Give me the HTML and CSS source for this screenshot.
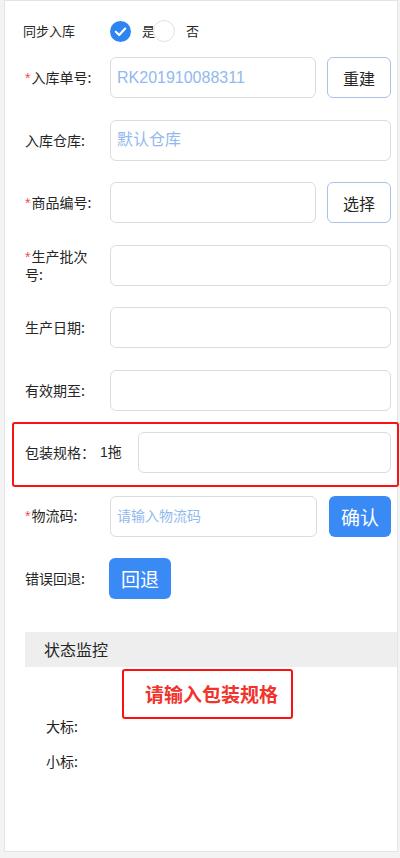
FILE: index.html
```html
<!DOCTYPE html>
<html lang="zh-CN">
<head>
<meta charset="utf-8">
<title>同步入库</title>
<link rel="stylesheet" href="styles.css">
</head>
<body>
<div class="card">
  <div class="sync-row">
    <span class="sync-label">同步入库</span>
    <span class="radio radio-on">
      <svg width="21" height="21" viewBox="0 0 21 21"><circle cx="10.5" cy="10.5" r="10.5" fill="#2f84f3"/><polyline points="5.8,10.8 9.2,14 15.2,7.6" fill="none" stroke="#fff" stroke-width="2.2" stroke-linecap="round" stroke-linejoin="round"/></svg>
    </span>
    <span class="radio-text">是</span>
    <span class="radio radio-off"></span>
    <span class="radio-text radio-text-last">否</span>
  </div>

  <div class="form">
    <div class="row">
      <label class="label"><span class="req">*</span>入库单号:</label>
      <input class="field field-value" value="RK201910088311" readonly>
      <button class="btn btn-plain">重建</button>
    </div>
    <div class="row">
      <label class="label">入库仓库:</label>
      <input class="field" placeholder="默认仓库">
    </div>
    <div class="row">
      <label class="label"><span class="req">*</span>商品编号:</label>
      <input class="field">
      <button class="btn btn-plain">选择</button>
    </div>
    <div class="row">
      <label class="label label-wrap"><span class="req">*</span>生产批次号:</label>
      <input class="field">
    </div>
    <div class="row">
      <label class="label">生产日期:</label>
      <input class="field">
    </div>
    <div class="row">
      <label class="label">有效期至:</label>
      <input class="field">
    </div>
    <div class="row row-marked">
      <label class="label label-auto">包装规格：</label>
      <span class="unit">1拖</span>
      <input class="field field-pack">
    </div>
    <div class="row">
      <label class="label"><span class="req">*</span>物流码:</label>
      <input class="field field-small" placeholder="请输入物流码">
      <button class="btn btn-primary btn-confirm">确认</button>
    </div>
    <div class="row row-last">
      <label class="label">错误回退:</label>
      <button class="btn btn-primary btn-back">回退</button>
    </div>
  </div>

  <div class="status">
    <div class="status-head">状态监控</div>
    <div class="status-line status-first">大标:</div>
    <div class="status-line">小标:</div>
    <div class="toast">请输入包装规格</div>
  </div>
</div>
</body>
</html>
```

FILE: styles.css
```css
html, body {
  margin: 0;
  padding: 0;
}
body {
  background: #f3f3f3;
  padding: 0 2px 0 4px;
  font-family: "Noto Sans CJK SC", "Liberation Sans", sans-serif;
  color: #262626;
}
.card {
  box-sizing: border-box;
  width: 394px;
  height: 852px;
  background: #fff;
  border: 1px solid #e4e4e4;
  padding: 19px 6px 0 20px;
}

/* sync row */
.sync-row {
  display: flex;
  align-items: center;
  height: 22px;
  margin-bottom: 15px;
  font-size: 13px;
  line-height: 16px;
}
.sync-label {
  width: 87px;
  margin-left: -2px;
}
.radio {
  display: block;
  box-sizing: border-box;
  flex: none;
}
.radio svg { display: block; }
.radio-on {
  width: 21px;
  height: 21px;
  margin-right: 11px;
}
.radio-off {
  width: 22px;
  height: 22px;
  border: 1px solid #e2e2e2;
  border-radius: 50%;
  background: #fff;
  margin-left: -2px;
  margin-right: 11px;
}

/* form */
.form {
  display: flex;
  flex-direction: column;
}
.row {
  display: flex;
  align-items: center;
  height: 41px;
  margin-bottom: 21.5px;
}
.row-last {
  margin-bottom: 32.5px;
}
.label {
  flex: none;
  width: 72px;
  margin-right: 13px;
  font-size: 14px;
  line-height: 17px;
  color: #262626;
}
.label-auto {
  width: auto;
  margin-right: 0;
}
.req {
  color: #f24c4c;
  font-family: "Liberation Sans", sans-serif;
  margin-right: 1px;
}
.unit {
  flex: none;
  margin-left: 5px;
  font-size: 14px;
  line-height: 17px;
  font-family: "Liberation Sans", "Noto Sans CJK SC", sans-serif;
}
.field {
  flex: 1;
  min-width: 0;
  box-sizing: border-box;
  height: 41px;
  margin: 0;
  padding: 0 6px;
  border: 1px solid #dcdcdc;
  border-radius: 6px;
  background: #fff;
  font-family: "Liberation Sans", "Noto Sans CJK SC", sans-serif;
  font-size: 16px;
  color: #92b9ee;
  outline: none;
}
.field::placeholder {
  color: #92b9ee;
  opacity: 1;
}
.field-small {
  font-size: 14px;
}
.field-pack {
  margin-left: 16px;
}
.row-marked {
  box-sizing: border-box;
  height: 64.5px;
  margin: -10px -8px 9px -13px;
  padding: 8px 6px 11px 11px;
  border: 2px solid #ff1010;
  border-radius: 3px;
}

/* buttons */
.btn {
  flex: none;
  box-sizing: border-box;
  height: 41px;
  margin: 0 0 0 11px;
  padding: 0;
  border-radius: 6px;
  font-family: "Noto Sans CJK SC", sans-serif;
  cursor: pointer;
}
.btn-plain {
  width: 64px;
  border: 1px solid #a8c3e8;
  background: #fff;
  color: #262626;
  font-size: 16px;
}
.btn-primary {
  border: none;
  background: #3a8af6;
  color: #fff;
  font-size: 19px;
}
.btn-confirm {
  width: 62px;
  margin-left: 12px;
}
.btn-back {
  width: 62px;
  margin-left: -1px;
}

/* status */
.status {
  position: relative;
}
.status-head {
  height: 35px;
  margin-right: -6px;
  background: #eeeeee;
  padding-left: 19px;
  font-size: 16px;
  line-height: 35px;
  color: #262626;
}
.status-line {
  padding-left: 21px;
  font-size: 14px;
  line-height: 20px;
  height: 20px;
  margin-bottom: 15px;
  color: #222;
}
.status-first {
  margin-top: 49px;
}
.toast {
  position: absolute;
  left: 97px;
  top: 37px;
  box-sizing: border-box;
  width: 171px;
  height: 50px;
  border: 2px solid #ff1010;
  border-radius: 3px;
  background: #fff;
  padding-left: 21px;
  font-size: 19px;
  font-weight: bold;
  line-height: 46px;
  color: #f2332b;
  white-space: nowrap;
}
```
